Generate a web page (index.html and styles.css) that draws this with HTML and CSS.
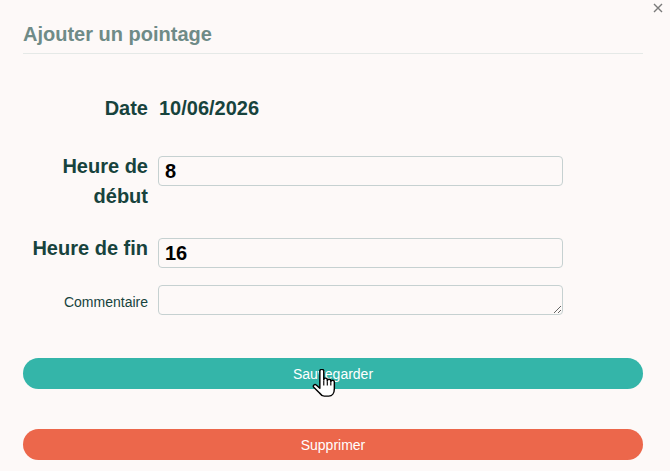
FILE: index.html
```html
<!DOCTYPE html>
<html lang="fr">
<head>
<meta charset="utf-8">
<title>Ajouter un pointage</title>
<link rel="stylesheet" href="styles.css">
</head>
<body>
<div class="modal">
  <button class="close" type="button" aria-label="Fermer">
    <svg width="10" height="10" viewBox="0 0 10 10"><path d="M1 1L9 9M9 1L1 9" stroke="#7a7a7a" stroke-width="1.4" fill="none"/></svg>
  </button>
  <div class="header">
    <h2 class="title">Ajouter un pointage</h2>
  </div>
  <form class="form">
    <div class="row row-date">
      <label class="label">Date</label>
      <div class="value">10/06/2026</div>
    </div>
    <div class="row row-start">
      <label class="label">Heure de début</label>
      <input class="field" type="text" value="8">
    </div>
    <div class="row row-end">
      <label class="label">Heure de fin</label>
      <input class="field" type="text" value="16">
    </div>
    <div class="row row-comment">
      <label class="label label-small">Commentaire</label>
      <textarea class="field area"></textarea>
    </div>
  </form>
  <div class="actions">
    <button class="btn btn-save" type="button">Sauvegarder</button>
    <button class="btn btn-delete" type="button">Supprimer</button>
  </div>
  <svg class="cursor" width="25" height="29" viewBox="0 0 24 28">
    <path d="M7.5,2.2 a1.9,1.9 0 0 1 3.8,0 V10.5 a1.7,1.7 0 0 1 3.4,0 V11.5 a1.7,1.7 0 0 1 3.4,0 V12.5 a1.7,1.7 0 0 1 3.4,0 V19 c0,4.2 -2.2,7.2 -5.4,7.2 H11.8 c-2,0 -3.2,-1 -4.6,-3 L1.6,17.6 a1.6,1.6 0 0 1 2.4,-2.1 L7.5,18.6 Z" fill="#fff" stroke="#000" stroke-width="1.4" stroke-linejoin="round"/>
    <path d="M11.3,11 V16 M14.7,12 V16 M18.1,13 V16" stroke="#000" stroke-width="1.1" fill="none"/>
  </svg>
</div>
</body>
</html>
```

FILE: styles.css
```css
html, body {
  margin: 0;
  padding: 0;
  background: #fdf9f8;
}

body {
  font-family: "Liberation Sans", Arial, sans-serif;
}

.modal {
  position: relative;
  padding: 0 27px 0 23px;
}

.close {
  position: absolute;
  top: 3px;
  right: 7px;
  padding: 0;
  border: 0;
  background: none;
  width: 10px;
  height: 10px;
  display: block;
}

.close svg {
  display: block;
}

.header {
  padding: 22px 0 7px;
  border-bottom: 1px solid #e5e9e7;
}

.title {
  margin: 0;
  font-size: 20px;
  line-height: 24px;
  font-weight: bold;
  color: #6f8b87;
}

.form {
  margin-top: 39px;
  width: 540px;
}

.row {
  display: flex;
  align-items: flex-start;
}

.label {
  flex: 0 0 125px;
  width: 125px;
  margin-right: 10px;
  text-align: right;
  font-size: 20px;
  line-height: 30px;
  font-weight: bold;
  color: #17433d;
}

.label-small {
  font-size: 14px;
  font-weight: normal;
  line-height: 20px;
  margin-top: 12px;
}

.value {
  font-size: 20px;
  line-height: 30px;
  font-weight: bold;
  color: #17433d;
  padding-left: 1px;
}

.row-date { margin-bottom: 28px; }
.row-start { margin-bottom: 22px; }
.row-end { margin-bottom: 12px; }

.field {
  display: block;
  box-sizing: border-box;
  flex: 1 1 auto;
  width: 405px;
  height: 30px;
  margin: 5px 0 0;
  padding: 0 6px;
  border: 1px solid #c6d1d1;
  border-radius: 4px;
  background: transparent;
  font-family: "Liberation Sans", Arial, sans-serif;
  font-size: 20px;
  font-weight: bold;
  color: #000;
  outline: none;
}

.area {
  resize: vertical;
  font-size: 14px;
  font-weight: normal;
}

.actions {
  display: flex;
  flex-direction: column;
  gap: 40px;
  margin-top: 43px;
}

.btn {
  display: block;
  width: 100%;
  height: 31px;
  border: 0;
  border-radius: 16px;
  color: #fff;
  font-family: "Liberation Sans", Arial, sans-serif;
  font-size: 14px;
  padding: 0;
}

.btn-save {
  background: #34b5a9;
}

.btn-delete {
  background: #ec674b;
}

.cursor {
  position: absolute;
  left: 312px;
  top: 369px;
}
```
